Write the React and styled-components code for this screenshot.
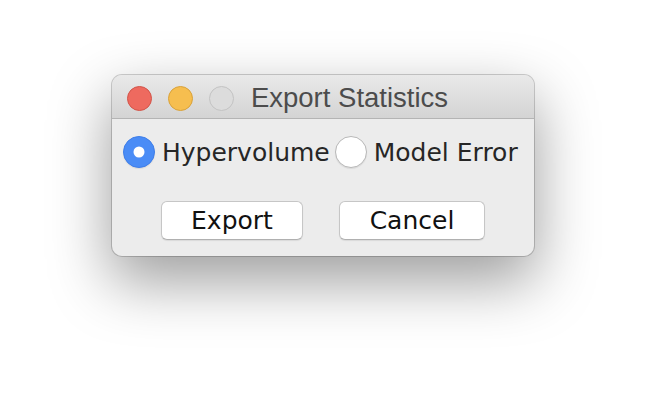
import React, { useState } from "react";
import styled, { createGlobalStyle } from "styled-components";

const GlobalStyle = createGlobalStyle`
  html, body {
    margin: 0;
    padding: 0;
    background: #ffffff;
  }
  body {
    width: 646px;
    height: 404px;
    overflow: hidden;
  }
`;

export default function App() {
  const [choice, setChoice] = useState("hypervolume");

  return (
    <Page>
      <GlobalStyle />
      <Window>
        <TitleBar>
          <Lights>
            <Light color="#ee6a5f" border="#d25449" />
            <Light color="#f6be4f" border="#d9a23a" />
            <Light color="#dcdcdc" border="#c3c3c3" />
          </Lights>
          <Title>Export Statistics</Title>
        </TitleBar>
        <Body>
          <RadioRow>
            <RadioLabel onClick={() => setChoice("hypervolume")}>
              <Radio className={choice === "hypervolume" ? "active" : ""} />
              Hypervolume
            </RadioLabel>
            <RadioLabel onClick={() => setChoice("model")}>
              <Radio className={choice === "model" ? "active" : ""} />
              Model Error
            </RadioLabel>
          </RadioRow>
          <ButtonRow>
            <Button width={142}>Export</Button>
            <Button width={146}>Cancel</Button>
          </ButtonRow>
        </Body>
      </Window>
    </Page>
  );
}

const Page = styled.div`
  width: 646px;
  height: 404px;
  display: flex;
  justify-content: center;
  align-items: flex-start;
  padding-top: 75px;
  box-sizing: border-box;
`;

const Window = styled.div`
  width: 422px;
  height: 181px;
  background: #ececec;
  border-radius: 10px;
  overflow: hidden;
  display: flex;
  flex-direction: column;
  box-shadow: 0 0 0 1px rgba(0, 0, 0, 0.18), 0 24px 60px 2px rgba(0, 0, 0, 0.38);
`;

const TitleBar = styled.div`
  position: relative;
  height: 43px;
  flex: none;
  display: flex;
  align-items: center;
  justify-content: center;
  background: linear-gradient(#e9e9e9, #d4d4d4);
  border-bottom: 1px solid #b4b4b4;
`;

const Lights = styled.div`
  position: absolute;
  left: 15px;
  top: 11px;
  display: flex;
  gap: 16px;
`;

const Light = styled.span`
  width: 23px;
  height: 23px;
  border-radius: 50%;
  background: ${(props) => props.color};
  border: 1px solid ${(props) => props.border};
`;

const Title = styled.span`
  font-family: "Liberation Sans", Arial, sans-serif;
  font-size: 27.5px;
  color: #4c4c4c;
  margin-left: 53px;
  margin-top: 2px;
`;

const Body = styled.div`
  flex: 1;
  display: flex;
  flex-direction: column;
  padding: 17px 11px 0;
`;

const RadioRow = styled.div`
  display: flex;
  align-items: center;
  gap: 5px;
  height: 32px;
`;

const RadioLabel = styled.label`
  display: flex;
  align-items: center;
  gap: 7px;
  font-family: "DejaVu Sans", Verdana, sans-serif;
  font-size: 25px;
  color: #262626;
  cursor: default;
`;

const Radio = styled.span`
  position: relative;
  width: 30px;
  height: 30px;
  border-radius: 50%;
  background: #ffffff;
  border: 1px solid #b8b8b8;
  box-shadow: 0 1px 1px rgba(0, 0, 0, 0.08);

  &.active {
    background: #4a8cf6;
    border-color: #3f7ee9;
  }

  &.active::before {
    content: "";
    position: absolute;
    top: 50%;
    left: 50%;
    transform: translate(-50%, -50%);
    width: 11px;
    height: 11px;
    border-radius: 50%;
    background: #ffffff;
  }
`;

const ButtonRow = styled.div`
  display: flex;
  justify-content: center;
  gap: 36px;
  margin-top: 33px;
`;

const Button = styled.button`
  width: ${(props) => props.width}px;
  height: 39px;
  padding: 0;
  background: #ffffff;
  border: 1px solid #c6c6c6;
  border-bottom-color: #b0b0b0;
  border-radius: 6px;
  box-shadow: 0 1px 1px rgba(0, 0, 0, 0.08);
  font-family: "DejaVu Sans", Verdana, sans-serif;
  font-size: 25px;
  color: #111111;
`;
